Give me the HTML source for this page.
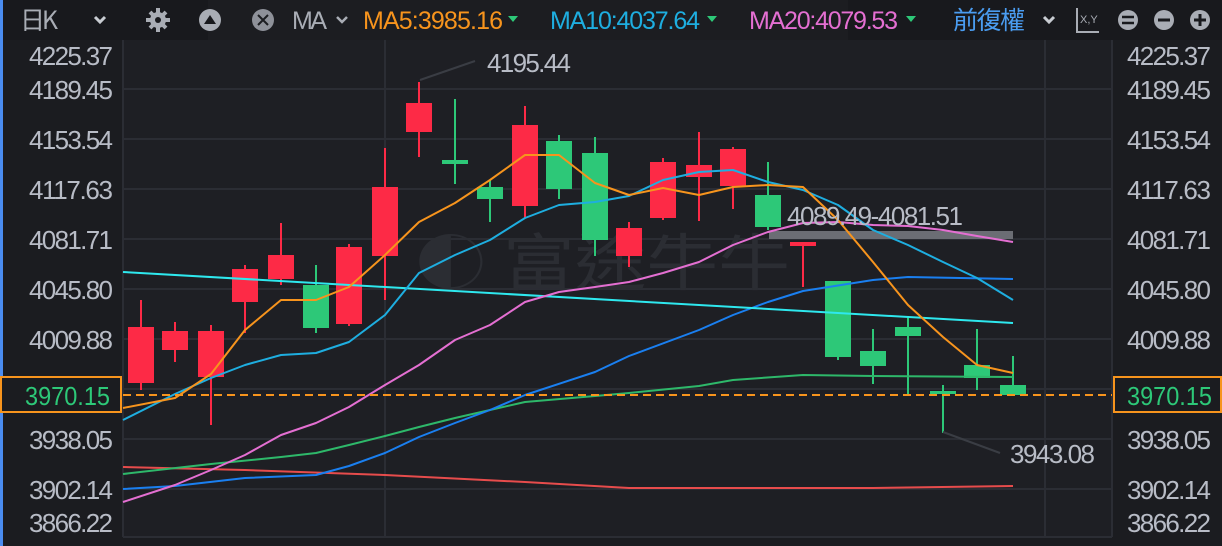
<!DOCTYPE html>
<html><head><meta charset="utf-8"><style>
body{margin:0;width:1222px;height:546px;overflow:hidden;background:#1b1c20;font-family:"Liberation Sans","Noto Sans CJK TC",sans-serif;}
</style></head><body>
<svg width="1222" height="546" xmlns="http://www.w3.org/2000/svg" style="position:absolute;left:0;top:0">
<rect x="0" y="0" width="1222" height="546" fill="#1b1c20"/>
<rect x="0" y="0" width="1222" height="40" fill="#18191d"/>
<rect x="208" y="0" width="640" height="40" fill="#1c1d21"/>
<rect x="123" y="40" width="989" height="497" fill="#1e1f24"/>
<rect x="0" y="0" width="3" height="546" fill="#4a8cf0"/>
<g stroke="#2b2d34" stroke-width="2">
<line x1="123" y1="89" x2="1112" y2="89"/><line x1="123" y1="139" x2="1112" y2="139"/><line x1="123" y1="189" x2="1112" y2="189"/><line x1="123" y1="239" x2="1112" y2="239"/><line x1="123" y1="289" x2="1112" y2="289"/><line x1="123" y1="339" x2="1112" y2="339"/><line x1="123" y1="389" x2="1112" y2="389"/><line x1="123" y1="439" x2="1112" y2="439"/><line x1="123" y1="489" x2="1112" y2="489"/><line x1="123" y1="537" x2="1112" y2="537"/>
<line x1="385" y1="40" x2="385" y2="537"/><line x1="1045" y1="40" x2="1045" y2="537"/><line x1="123" y1="40" x2="123" y2="537"/><line x1="1112" y1="40" x2="1112" y2="537"/>
</g>
<text x="415" y="285" font-size="62" fill="#2b2d33" font-family="Noto Sans CJK TC,sans-serif" textLength="375" lengthAdjust="spacingAndGlyphs">◐ 富途牛牛</text>
<g font-size="26" fill="#b8bcc6" text-anchor="end" lengthAdjust="spacingAndGlyphs">
<text x="113" y="65" textLength="84">4225.37</text><text x="113" y="99" textLength="84">4189.45</text><text x="113" y="149" textLength="84">4153.54</text><text x="113" y="199" textLength="84">4117.63</text><text x="113" y="249" textLength="84">4081.71</text><text x="113" y="299" textLength="84">4045.80</text><text x="113" y="349" textLength="84">4009.88</text><text x="113" y="449" textLength="84">3938.05</text><text x="113" y="499" textLength="84">3902.14</text><text x="113" y="532" textLength="84">3866.22</text>
</g>
<g font-size="26" fill="#b8bcc6" lengthAdjust="spacingAndGlyphs">
<text x="1127" y="65" textLength="84">4225.37</text><text x="1127" y="99" textLength="84">4189.45</text><text x="1127" y="149" textLength="84">4153.54</text><text x="1127" y="199" textLength="84">4117.63</text><text x="1127" y="249" textLength="84">4081.71</text><text x="1127" y="299" textLength="84">4045.80</text><text x="1127" y="349" textLength="84">4009.88</text><text x="1127" y="449" textLength="84">3938.05</text><text x="1127" y="499" textLength="84">3902.14</text><text x="1127" y="532" textLength="84">3866.22</text>
</g>
<g stroke-width="2">
<g fill="#fd2a46" stroke="#fd2a46">
<line x1="141" y1="300" x2="141" y2="390"/><rect x="128" y="327" width="26" height="56" stroke="none"/>
<line x1="175" y1="322" x2="175" y2="362"/><rect x="162" y="331" width="26" height="19" stroke="none"/>
<line x1="211" y1="325" x2="211" y2="425"/><rect x="198" y="331" width="26" height="46" stroke="none"/>
<line x1="245" y1="265" x2="245" y2="333"/><rect x="232" y="269" width="26" height="33" stroke="none"/>
<line x1="281" y1="223" x2="281" y2="285"/><rect x="268" y="255" width="26" height="24" stroke="none"/>
<line x1="349" y1="244" x2="349" y2="326"/><rect x="336" y="247" width="26" height="77" stroke="none"/>
<line x1="385" y1="148" x2="385" y2="300"/><rect x="372" y="187" width="26" height="69" stroke="none"/>
<line x1="419" y1="82" x2="419" y2="157"/><rect x="406" y="103" width="26" height="29" stroke="none"/>
<line x1="525" y1="106" x2="525" y2="218"/><rect x="512" y="125" width="26" height="81" stroke="none"/>
<line x1="629" y1="222" x2="629" y2="267"/><rect x="616" y="228" width="26" height="28" stroke="none"/>
<line x1="663" y1="158" x2="663" y2="220"/><rect x="650" y="162" width="26" height="56" stroke="none"/>
<line x1="699" y1="132" x2="699" y2="221"/><rect x="686" y="165" width="26" height="12" stroke="none"/>
<line x1="733" y1="147" x2="733" y2="209"/><rect x="720" y="149" width="26" height="37" stroke="none"/>
<line x1="803" y1="242" x2="803" y2="287"/><rect x="790" y="242" width="26" height="4" stroke="none"/>
</g>
<g fill="#2dc878" stroke="#2dc878">
<line x1="316" y1="265" x2="316" y2="333"/><rect x="303" y="285" width="26" height="43" stroke="none"/>
<line x1="455" y1="99" x2="455" y2="184"/><rect x="442" y="160" width="26" height="4" stroke="none"/>
<line x1="490" y1="180" x2="490" y2="222"/><rect x="477" y="187" width="26" height="12" stroke="none"/>
<line x1="559" y1="135" x2="559" y2="199"/><rect x="546" y="141" width="26" height="48" stroke="none"/>
<line x1="595" y1="137" x2="595" y2="256"/><rect x="582" y="153" width="26" height="87" stroke="none"/>
<line x1="768" y1="162" x2="768" y2="230"/><rect x="755" y="195" width="26" height="32" stroke="none"/>
<line x1="838" y1="281" x2="838" y2="360"/><rect x="825" y="281" width="26" height="76" stroke="none"/>
<line x1="873" y1="329" x2="873" y2="384"/><rect x="860" y="351" width="26" height="15" stroke="none"/>
<line x1="908" y1="316" x2="908" y2="396"/><rect x="895" y="327" width="26" height="9" stroke="none"/>
<line x1="943" y1="385" x2="943" y2="433"/><rect x="930" y="391" width="26" height="3" stroke="none"/>
<line x1="977" y1="329" x2="977" y2="390"/><rect x="964" y="365" width="26" height="13" stroke="none"/>
<line x1="1013" y1="356" x2="1013" y2="396"/><rect x="1000" y="385" width="26" height="10" stroke="none"/>
</g>
</g>
<rect x="769" y="231" width="244" height="8" fill="#6b6d74"/>
<g fill="none" stroke-width="2" stroke-linejoin="round">
<polyline stroke="#e74c4c" points="123,467 245,470 385,475 525,482 629,488 733,488 873,488 1013,486"/>
<polyline stroke="#2eb86a" points="123,474 211,464 281,457 316,453 349,445 385,436 419,427 455,418 490,410 525,402 595,396 629,393 699,386 733,380 803,375 873,376 1013,377"/>
<polyline stroke="#1a7ff0" points="123,489 175,486 245,478 316,475 349,466 385,453 419,437 455,423 490,410 525,395 595,372 629,356 699,330 733,315 768,302 803,291 873,280 908,277 1013,279"/>
<line stroke="#2ee8ee" x1="123" y1="272" x2="1013" y2="323"/>
<polyline stroke="#e46fd2" points="123,502 175,485 211,470 245,455 281,435 316,423 349,407 385,385 419,365 455,340 490,325 525,302 559,292 595,287 629,282 663,273 699,262 733,245 768,232 803,223 838,222 873,225 908,226 943,230 977,236 1013,242"/>
<polyline stroke="#1eaee0" points="123,420 175,394 211,378 245,365 281,355 316,353 349,342 385,315 419,273 455,255 490,240 525,218 559,205 595,202 629,196 663,180 699,172 733,170 768,182 803,190 838,205 873,230 908,245 943,262 977,278 1013,300"/>
<polyline stroke="#f7941d" points="123,408 175,398 211,374 245,330 281,300 316,300 349,287 385,255 419,222 455,203 490,180 525,155 559,155 595,183 629,195 663,188 699,195 733,187 768,185 803,187 838,220 873,262 908,305 943,337 977,365 1013,373"/>
</g>
<line x1="123" y1="395" x2="1112" y2="395" stroke="#f7941d" stroke-width="2" stroke-dasharray="8,5"/>
<line x1="420" y1="80" x2="475" y2="61" stroke="#3a3d44" stroke-width="2"/>
<line x1="943" y1="432" x2="1000" y2="453" stroke="#3a3d44" stroke-width="2"/>
<g font-size="26" fill="#b8bcc6" lengthAdjust="spacingAndGlyphs">
<text x="487" y="72" textLength="84">4195.44</text>
<text x="1010" y="463" textLength="85">3943.08</text>
<text x="787" y="225" textLength="176">4089.49-4081.51</text>
</g>
<rect x="1" y="377" width="120" height="35" fill="#1b1c20" stroke="#f7941d" stroke-width="2"/>
<rect x="1114" y="377" width="107" height="35" fill="#1b1c20" stroke="#f7941d" stroke-width="2"/>
<text x="110" y="405" font-size="26" fill="#2dc878" text-anchor="end" textLength="85" lengthAdjust="spacingAndGlyphs">3970.15</text>
<text x="1127" y="405" font-size="26" fill="#2dc878" textLength="85" lengthAdjust="spacingAndGlyphs">3970.15</text>
<g font-size="25" lengthAdjust="spacingAndGlyphs">
<text x="20" y="29" fill="#a9adb5" font-family="Noto Sans CJK TC,sans-serif" textLength="38">日K</text>
<path d="M95 17 l5 5 l5-5" stroke="#c8ccd2" stroke-width="3" fill="none"/>
<g stroke="#a9adb5" stroke-width="4"><line x1="158" y1="8" x2="158" y2="32"/><line x1="146" y1="20" x2="170" y2="20"/><line x1="150" y1="12" x2="166" y2="28"/><line x1="166" y1="12" x2="150" y2="28"/></g>
<circle cx="158" cy="20" r="8" fill="#a9adb5"/>
<circle cx="158" cy="20" r="3" fill="#18191d"/>
<circle cx="210" cy="20" r="11" fill="#a9adb5"/><path d="M204 24 h12 l-6-9z" fill="#18191d"/>
<circle cx="263" cy="20" r="11" fill="#8e9199"/><path d="M258 15 l10 10 M268 15 l-10 10" stroke="#1c1d21" stroke-width="2"/>
<text x="292" y="29" fill="#a9adb5" textLength="35">MA</text>
<path d="M337 17 l5 5 l5-5" stroke="#a9adb5" stroke-width="2.5" fill="none"/>
<text x="363" y="29" fill="#f7941d" textLength="140">MA5:3985.16</text><path d="M508 16 h10 l-5 6z" fill="#2dc878"/>
<text x="550" y="29" fill="#1eaee0" textLength="150">MA10:4037.64</text><path d="M707 16 h10 l-5 6z" fill="#2dc878"/>
<text x="749" y="29" fill="#e46fd2" textLength="149">MA20:4079.53</text><path d="M906 16 h10 l-5 6z" fill="#2dc878"/>
<text x="953" y="29" fill="#4a9cf0" font-family="Noto Sans CJK TC,sans-serif" textLength="72">前復權</text>
<path d="M1044 17 l5 5 l5-5" stroke="#c8ccd2" stroke-width="3" fill="none"/>
<path d="M1077 8 v24 h22" stroke="#a9adb5" stroke-width="2" fill="none"/>
<text x="1080" y="23" font-size="11" fill="#a9adb5">X,Y</text>
<circle cx="1128" cy="20" r="10" fill="#a9adb5"/><path d="M1122 17h12M1122 23h12" stroke="#18191d" stroke-width="2.5"/>
<circle cx="1164" cy="20" r="10" fill="#a9adb5"/><path d="M1158 20h12" stroke="#18191d" stroke-width="3"/>
<circle cx="1200" cy="20" r="10" fill="#a9adb5"/><path d="M1194 20h12M1200 14v12" stroke="#18191d" stroke-width="3"/>
</g>
</svg>
</body></html>
